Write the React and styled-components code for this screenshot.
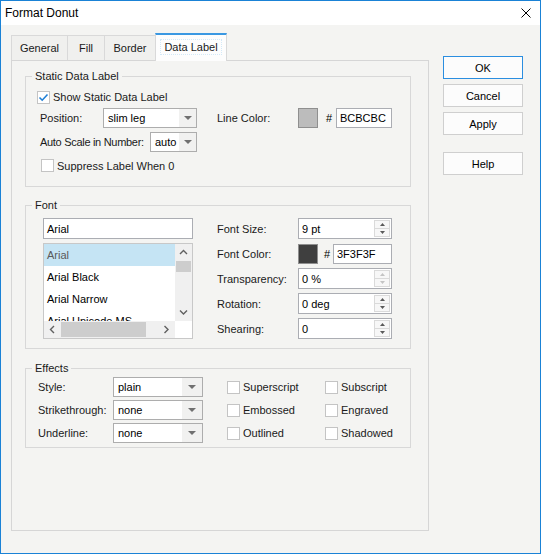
import React from 'react';
import styled, { createGlobalStyle, css } from 'styled-components';

const Global = createGlobalStyle`
  html, body { margin: 0; padding: 0; background: #ffffff; }
  body { font-family: "Liberation Sans", Arial, sans-serif; }
  *, *::before, *::after { box-sizing: border-box; }
`;

const Window = styled.div`
  width: 541px;
  height: 554px;
  border: 1px solid #1a82d6;
  background: #f4f4f2;
  display: flex;
  flex-direction: column;
  font-family: "Liberation Sans", Arial, sans-serif;
  font-size: 11px;
  color: #1a1a1a;
`;

const TitleBar = styled.div`
  height: 24px;
  background: #ffffff;
  display: flex;
  align-items: center;
  justify-content: space-between;
  padding: 0 9px 0 4px;
  font-size: 12px;
  color: #000;
`;

const CloseIcon = styled.svg`
  width: 10px;
  height: 10px;
  display: block;
`;

const Main = styled.div`
  flex: 1;
  display: flex;
  gap: 14px;
  padding: 8px 17px 22px 10px;
`;

const TabArea = styled.div`
  width: 418px;
  display: flex;
  flex-direction: column;
`;

const TabStrip = styled.div`
  height: 27px;
  display: flex;
  align-items: flex-end;
  padding-left: 0;
`;

const Tab = styled.div`
  width: ${p => p.$w}px;
  height: 25px;
  margin-left: ${p => (p.$first ? 0 : -1)}px;
  border: 1px solid #d9d9d9;
  border-bottom: none;
  background: #f0f0ee;
  display: flex;
  align-items: center;
  justify-content: center;
  color: #1a1a1a;
  ${p => p.$active && css`
    height: 28px;
    margin-bottom: -1px;
    border-top: 2px solid #3a98e2;
    background: #fdfdfd;
    position: relative;
    z-index: 1;
    padding-bottom: 3px;
  `}
`;

const FocusText = styled.span`
  border: 1px dotted #d3e9f8;
  padding: 1px 3px;
`;

const Panel = styled.div`
  flex: 1;
  border: 1px solid #d6d6d6;
  background: #f4f4f2;
  padding: 8px 17px 0 13px;
`;

const Group = styled.fieldset`
  margin: ${p => p.$mt || 0}px 0 0;
  padding: ${p => p.$pt}px 0 ${p => p.$pb}px 0;
  border: 1px solid #d8d8d8;
  min-width: 0;
`;

const Legend = styled.legend`
  margin-left: 6px;
  padding: 0 3px;
  line-height: 14px;
  font-size: 11px;
  color: #1a1a1a;
`;

const Row = styled.div`
  display: flex;
  align-items: center;
  height: ${p => p.$h || 21}px;
  margin-top: ${p => p.$mt || 0}px;
  padding-left: ${p => p.$pl || 0}px;
`;

const Label = styled.span`
  width: ${p => p.$w}px;
  flex: none;
  margin-left: ${p => p.$ml || 0}px;
  letter-spacing: ${p => p.$ls || 0}px;
  white-space: nowrap;
`;

const CheckWrap = styled.span`
  display: inline-flex;
  align-items: center;
  gap: 3px;
  width: ${p => (p.$w ? `${p.$w}px` : 'auto')};
  margin-left: ${p => p.$ml || 0}px;
  flex: none;
  white-space: nowrap;
`;

const Box = styled.span`
  width: 13px;
  height: 13px;
  border: 1px solid #c4c4c4;
  background: #ffffff;
  display: inline-flex;
  align-items: center;
  justify-content: center;
  flex: none;
`;

const Select = styled.div`
  width: ${p => p.$w}px;
  height: 20px;
  border: 1px solid #adadad;
  background: #ffffff;
  display: flex;
  flex: none;
`;

const SelectText = styled.span`
  flex: 1;
  padding-left: 4px;
  display: flex;
  align-items: center;
  color: #000;
  white-space: nowrap;
  overflow: hidden;
`;

const SelectArrow = styled.span`
  width: ${p => p.$w || 17}px;
  background: #f1f1f0;
  display: flex;
  align-items: center;
  justify-content: center;
`;

const Swatch = styled.span`
  width: 20px;
  height: 20px;
  border: 1px solid #8f8f8f;
  background: ${p => p.$c};
  flex: none;
`;

const Hash = styled.span`
  width: ${p => p.$w}px;
  padding-left: ${p => p.$pl}px;
  flex: none;
  color: #000;
`;

const TextBox = styled.div`
  width: ${p => p.$w}px;
  height: ${p => p.$h || 20}px;
  border: 1px solid #abadb3;
  background: #ffffff;
  padding-left: 3px;
  display: flex;
  align-items: center;
  color: #000;
  flex: none;
`;

const FontBody = styled.div`
  display: flex;
  padding-left: 17px;
`;

const LeftCol = styled.div`
  width: 150px;
  display: flex;
  flex-direction: column;
  gap: 4px;
`;

const RightCol = styled.div`
  margin-left: 24px;
  display: flex;
  flex-direction: column;
  gap: 4px;
`;

const ListBox = styled.div`
  width: 150px;
  height: 96px;
  border: 1px solid #c8c8c8;
  background: #ffffff;
  display: grid;
  grid-template-columns: 1fr 17px;
  grid-template-rows: 1fr 17px;
`;

const Items = styled.div`
  overflow: hidden;
`;

const Item = styled.div`
  height: 22px;
  line-height: 22px;
  padding-left: 3px;
  white-space: nowrap;
  color: ${p => (p.$sel ? '#5a5a5a' : '#000')};
  background: ${p => (p.$sel ? '#c5e4f4' : 'transparent')};
`;

const VScroll = styled.div`
  background: #f0f0f0;
  display: flex;
  flex-direction: column;
`;

const HScroll = styled.div`
  background: #f0f0f0;
  display: flex;
`;

const ArrowBtn = styled.div`
  width: 17px;
  height: 17px;
  display: flex;
  align-items: center;
  justify-content: center;
  flex: none;
`;

const VThumb = styled.div`
  height: 11px;
  margin: 0 1px;
  background: #cdcdcd;
`;

const HThumb = styled.div`
  width: 85px;
  margin: 1px 0;
  background: #cdcdcd;
`;

const Spacer = styled.div`
  flex: 1;
`;

const Corner = styled.div`
  background: #ffffff;
`;

const Spin = styled.div`
  width: 94px;
  height: 21px;
  border: 1px solid #abadb3;
  background: #ffffff;
  display: flex;
  flex: none;
`;

const SpinText = styled.span`
  flex: 1;
  padding-left: 3px;
  display: flex;
  align-items: center;
  color: #000;
`;

const SpinButtons = styled.div`
  width: 16px;
  margin: 1px 1px 1px 0;
  display: flex;
  flex-direction: column;
`;

const SpinHalf = styled.div`
  flex: 1;
  border: 1px solid #dadada;
  margin-top: ${p => (p.$down ? -1 : 0)}px;
  background: #f7f7f7;
  display: flex;
  align-items: center;
  justify-content: center;
`;

const EffectsBody = styled.div`
  display: flex;
  flex-direction: column;
  gap: 3px;
`;

const ButtonCol = styled.div`
  width: 80px;
  margin-top: 23px;
  display: flex;
  flex-direction: column;
  gap: 5px;
`;

const Button = styled.div`
  height: 23px;
  margin-top: ${p => p.$mt || 0}px;
  border: 1px solid ${p => (p.$primary ? '#2b8ee0' : '#cfcfcf')};
  background: #fcfcfc;
  display: flex;
  align-items: center;
  justify-content: center;
  color: #000;
`;

const DownTri = ({ w = 8, color = '#707070' }) => (
  <svg width={w} height={4} viewBox="0 0 8 4"><path d="M0 0 H8 L4 4 Z" fill={color} /></svg>
);

const SpinTri = ({ up, color = '#5a5a5a' }) => (
  <svg width={5} height={3} viewBox="0 0 5 3">
    <path d={up ? 'M0 3 H5 L2.5 0 Z' : 'M0 0 H5 L2.5 3 Z'} fill={color} />
  </svg>
);

const Chevron = ({ dir }) => {
  const paths = {
    up: 'M1 5 L4.5 1.5 L8 5',
    down: 'M1 1.5 L4.5 5 L8 1.5',
    left: 'M5 1 L1.5 4.5 L5 8',
    right: 'M1.5 1 L5 4.5 L1.5 8',
  };
  const vertical = dir === 'up' || dir === 'down';
  return (
    <svg width={vertical ? 9 : 7} height={vertical ? 7 : 9} viewBox={vertical ? '0 0 9 7' : '0 0 7 9'}>
      <path d={paths[dir]} fill="none" stroke="#606060" strokeWidth="1.4" />
    </svg>
  );
};

const CheckBox = ({ checked }) => (
  <Box>
    {checked && (
      <svg width="11" height="11" viewBox="0 0 11 11">
        <path d="M1.5 5.5 L4.2 8.2 L9.5 2.5" fill="none" stroke="#1f7fd6" strokeWidth="1.6" />
      </svg>
    )}
  </Box>
);

const Dropdown = ({ w, value, aw }) => (
  <Select $w={w}>
    <SelectText>{value}</SelectText>
    <SelectArrow $w={aw}><DownTri /></SelectArrow>
  </Select>
);

const SpinBox = ({ value, disabled }) => (
  <Spin>
    <SpinText>{value}</SpinText>
    <SpinButtons>
      <SpinHalf><SpinTri up color={disabled ? '#c4c4c4' : '#5a5a5a'} /></SpinHalf>
      <SpinHalf $down><SpinTri color={disabled ? '#c4c4c4' : '#5a5a5a'} /></SpinHalf>
    </SpinButtons>
  </Spin>
);

const tabs = [
  { name: 'General', w: 57 },
  { name: 'Fill', w: 38 },
  { name: 'Border', w: 52 },
  { name: 'Data Label', w: 72, active: true },
];

const fonts = ['Arial', 'Arial Black', 'Arial Narrow', 'Arial Unicode MS'];

const effects = [
  { label: 'Style:', value: 'plain', a: 'Superscript', b: 'Subscript' },
  { label: 'Strikethrough:', value: 'none', a: 'Embossed', b: 'Engraved' },
  { label: 'Underline:', value: 'none', a: 'Outlined', b: 'Shadowed' },
];

export default function App() {
  return (
    <>
      <Global />
      <Window>
        <TitleBar>
          <span>Format Donut</span>
          <CloseIcon viewBox="0 0 10 10">
            <path d="M0.5 0.5 L9.5 9.5 M9.5 0.5 L0.5 9.5" stroke="#000" strokeWidth="1" />
          </CloseIcon>
        </TitleBar>
        <Main>
          <TabArea>
            <TabStrip>
              {tabs.map((t, i) => (
                <Tab key={t.name} $w={t.w} $first={i === 0} $active={t.active}>
                  {t.active ? <FocusText>{t.name}</FocusText> : t.name}
                </Tab>
              ))}
            </TabStrip>
            <Panel>
              <Group $pt={5} $pb={11}>
                <Legend>Static Data Label</Legend>
                <Row $h={18} $pl={11}>
                  <CheckWrap><CheckBox checked />Show Static Data Label</CheckWrap>
                </Row>
                <Row $mt={1} $pl={14}>
                  <Label $w={63}>Position:</Label>
                  <Dropdown w={94} value="slim leg" />
                  <Label $w={81} $ml={20}>Line Color:</Label>
                  <Swatch $c="#bcbcbc" />
                  <Hash $w={18} $pl={8}>#</Hash>
                  <TextBox $w={56}>BCBCBC</TextBox>
                </Row>
                <Row $mt={3} $pl={14}>
                  <Label $w={110} $ls={-0.3}>Auto Scale in Number:</Label>
                  <Dropdown w={47} value="auto" />
                </Row>
                <Row $mt={4} $h={19} $pl={15}>
                  <CheckWrap><CheckBox />Suppress Label When 0</CheckWrap>
                </Row>
              </Group>

              <Group $mt={11} $pt={6} $pb={9}>
                <Legend>Font</Legend>
                <FontBody>
                  <LeftCol>
                    <TextBox $w={150} $h={21}>Arial</TextBox>
                    <ListBox>
                      <Items>
                        {fonts.map((f, i) => (
                          <Item key={f} $sel={i === 0}>{f}</Item>
                        ))}
                      </Items>
                      <VScroll>
                        <ArrowBtn><Chevron dir="up" /></ArrowBtn>
                        <VThumb />
                        <Spacer />
                        <ArrowBtn><Chevron dir="down" /></ArrowBtn>
                      </VScroll>
                      <HScroll>
                        <ArrowBtn><Chevron dir="left" /></ArrowBtn>
                        <HThumb />
                        <Spacer />
                        <ArrowBtn><Chevron dir="right" /></ArrowBtn>
                      </HScroll>
                      <Corner />
                    </ListBox>
                  </LeftCol>
                  <RightCol>
                    <Row>
                      <Label $w={81}>Font Size:</Label>
                      <SpinBox value="9 pt" />
                    </Row>
                    <Row>
                      <Label $w={81}>Font Color:</Label>
                      <Swatch $c="#3f3f3f" />
                      <Hash $w={15} $pl={6}>#</Hash>
                      <TextBox $w={59}>3F3F3F</TextBox>
                    </Row>
                    <Row>
                      <Label $w={81}>Transparency:</Label>
                      <SpinBox value="0 %" disabled />
                    </Row>
                    <Row>
                      <Label $w={81}>Rotation:</Label>
                      <SpinBox value="0 deg" />
                    </Row>
                    <Row>
                      <Label $w={81}>Shearing:</Label>
                      <SpinBox value="0" />
                    </Row>
                  </RightCol>
                </FontBody>
              </Group>

              <Group $mt={12} $pt={2} $pb={4}>
                <Legend>Effects</Legend>
                <EffectsBody>
                  {effects.map(e => (
                    <Row key={e.label} $h={20} $pl={12}>
                      <Label $w={75}>{e.label}</Label>
                      <Dropdown w={90} value={e.value} aw={20} />
                      <CheckWrap $w={98} $ml={24}><CheckBox />{e.a}</CheckWrap>
                      <CheckWrap><CheckBox />{e.b}</CheckWrap>
                    </Row>
                  ))}
                </EffectsBody>
              </Group>
            </Panel>
          </TabArea>
          <ButtonCol>
            <Button $primary>OK</Button>
            <Button>Cancel</Button>
            <Button>Apply</Button>
            <Button $mt={12}>Help</Button>
          </ButtonCol>
        </Main>
      </Window>
    </>
  );
}
